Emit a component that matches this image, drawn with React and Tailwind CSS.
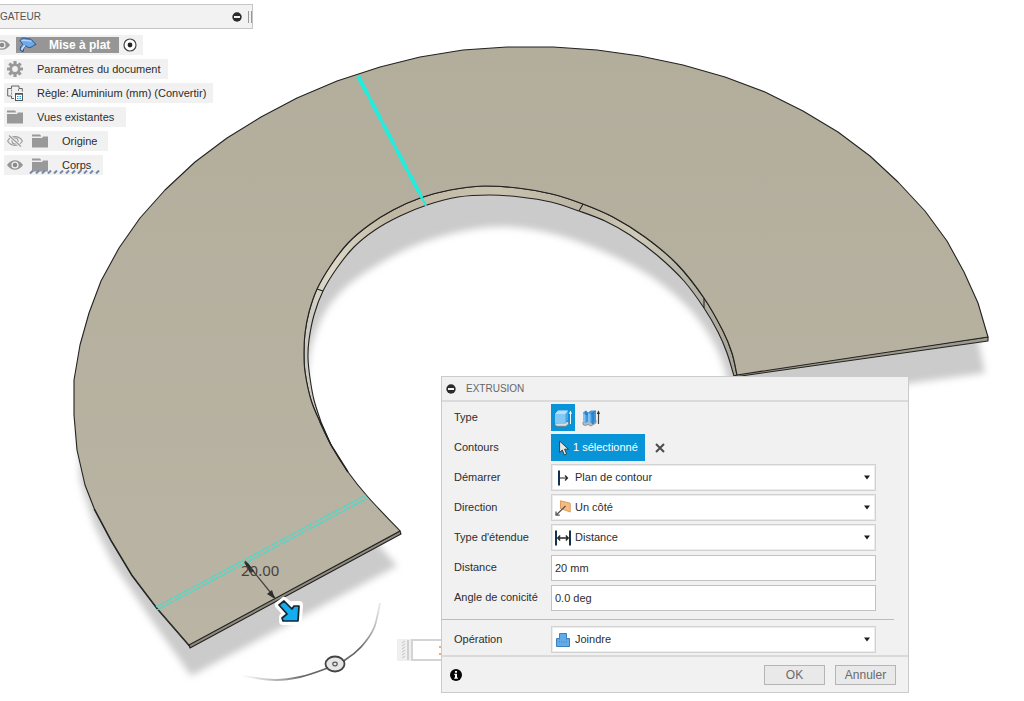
import React, { useState } from "react";

// Catmull-Rom interpolation through a list of points, returned as Bézier path data.
function curve(points) {
  let d = "";
  for (let i = 0; i < points.length - 1; i++) {
    const p0 = points[i - 1] || points[i];
    const p1 = points[i];
    const p2 = points[i + 1];
    const p3 = points[i + 2] || p2;
    d += ` C${p1[0] + (p2[0] - p0[0]) / 6} ${p1[1] + (p2[1] - p0[1]) / 6} ${p2[0] - (p3[0] - p1[0]) / 6} ${p2[1] - (p3[1] - p1[1]) / 6} ${p2[0]} ${p2[1]}`;
  }
  return d;
}

const line = (points) => points.map((p) => `L${p[0]} ${p[1]}`).join(" ");
const start = (points) => `M${points[0][0]} ${points[0][1]}`;

const OUTER = [
  [189, 645], [157, 608], [132, 575], [111, 540], [94, 508], [85, 485], [77, 450], [74, 415], [74, 380], [80, 345],
  [89, 313], [101, 281], [119, 248], [140, 218], [165, 190], [195, 162], [227, 138], [261, 117], [297, 98],
  [337, 81], [380, 67], [420, 57], [463, 50], [507, 47], [553, 47], [597, 50], [640, 56], [683, 65], [725, 77],
  [765, 92], [803, 111], [838, 132], [870, 156], [898, 182], [925, 211], [947, 241], [964, 272], [978, 303], [988, 337],
];
const INNER_TOP = [
  [737, 375], [732, 353], [723, 331], [704, 298], [677, 264], [645, 237], [613, 217], [583, 204], [552, 194], [518, 188],
  [483, 186], [450, 190], [420, 198], [393, 210], [369, 225], [348, 243], [331, 265], [317, 289], [309, 312], [305, 333],
  [304, 352], [305, 372], [311, 400], [320, 422], [331, 445], [348, 472], [368, 497], [400, 531],
];
const MERGE = INNER_TOP.length - 4;
const INNER_LOW = [
  [734, 376], [727, 353], [718, 332], [704, 308], [684, 281], [658, 256], [630, 235], [605, 221], [579, 211], [551, 202],
  [520, 197], [490, 195], [458, 197], [427, 205], [400, 216], [375, 230], [354, 247], [337, 268], [323, 291], [314, 315],
  [309, 340], [308, 358], [310, 378], [314, 400], [321, 422],
];
const SHADOW_INNER = [
  [340, 500], [309, 400], [309, 360], [315, 335], [327, 309], [346, 287], [374, 267], [407, 249], [440, 237], [475, 229],
  [510, 227], [545, 232], [579, 242], [613, 256], [645, 273], [670, 291], [693, 313], [712, 340], [725, 370], [732, 408],
];

function Model() {
  const face = `${start(OUTER)} ${line(OUTER)} L737 375 ${curve(INNER_TOP)} Z`;
  const wall = `${start(INNER_TOP)} ${curve(INNER_TOP.slice(0, MERGE + 1))} L321 422 ${curve([...INNER_LOW].reverse())} Z`;
  const shadow = `${start(SHADOW_INNER)} ${curve(SHADOW_INNER)} L985 373 L977 335 L940 300 L700 120 L400 100 L120 300 L79 430 L80 480 L94 525 L112 562 L150 618 L191 676 L397 566 Z`;
  return (
    <svg className="absolute left-0 top-0 h-[701px] w-[1024px] max-w-none" viewBox="0 0 1024 701" aria-hidden="true">
      <defs>
        <linearGradient id="face" x1="0" y1="0" x2="0" y2="1">
          <stop offset="0" stopColor="#b3ad9c" />
          <stop offset="1" stopColor="#bab4a4" />
        </linearGradient>
        <linearGradient id="wall" gradientUnits="userSpaceOnUse" x1="304" y1="0" x2="737" y2="0">
          <stop offset="0" stopColor="#c9c8c0" />
          <stop offset="0.06" stopColor="#ded9c9" />
          <stop offset="0.2" stopColor="#bfb7a3" />
          <stop offset="0.45" stopColor="#c9c2af" />
          <stop offset="0.64" stopColor="#bab4a2" />
          <stop offset="0.77" stopColor="#d0cab8" />
          <stop offset="0.88" stopColor="#b5b5a8" />
          <stop offset="1" stopColor="#aaa596" />
        </linearGradient>
        <linearGradient id="arc" gradientUnits="userSpaceOnUse" x1="242" y1="676" x2="380" y2="602">
          <stop offset="0" stopColor="#777" stopOpacity="0" />
          <stop offset="0.35" stopColor="#666" />
          <stop offset="0.75" stopColor="#666" />
          <stop offset="1" stopColor="#999" stopOpacity="0.2" />
        </linearGradient>
        <filter id="soft" x="-5%" y="-5%" width="110%" height="110%">
          <feGaussianBlur stdDeviation="3.5" />
        </filter>
      </defs>

      <path d={shadow} fill="#cbcbcb" filter="url(#soft)" />

      <g stroke="#222220" strokeWidth="1.1" strokeLinejoin="round">
        <path d="M189 644 L190 648 L401 534 L400 531 Z" fill="#8f8b80" />
        <path d="M737 373 L734 377 L988 341 L988 337 Z" fill="#9d998c" />
        <path d={wall} fill="url(#wall)" />
        <path d={face} fill="url(#face)" />
        <path d="M317 289 L323 291 M583 204 L579 211 M704 298 L704 308" fill="none" />
        <path d="M94 509 L111 541 L132 576 L157 609 L190 647" fill="none" />
      </g>
      <path d="M320 422 L331 445 L348 472" fill="none" stroke="#222220" strokeWidth="1.5" />

      <path d="M358 76 L422 198" stroke="#24ecdc" strokeWidth="3" />
      <path d="M358 76 L422 198" stroke="#24ecdc" strokeWidth="4" strokeDasharray="20 8" />
      <path d="M422 198 L426 206" stroke="#24ecdc" strokeWidth="2" />
      <path d="M156 607 L366 495 M157 610 L368 498" stroke="#45dccb" strokeWidth="1.2" strokeDasharray="9 1" />

      <path d="M245 561 L275 598" stroke="#3c3c3a" strokeWidth="1.2" />
      <path d="M244 562 L248 563 L254 571 L250 573 Z M275 599 L267 594 L272 590 Z" fill="#2c2c2a" />
      <text x="241" y="576" fontSize="15" fill="#444340" fontFamily="Noto Sans, sans-serif">20.00</text>

      <g strokeLinejoin="round">
        <path d="M279 605 L284 601 L293 609 L293 605 L299 605 L298 621 L283 621 L283 617 L288 615 Z" fill="#fff" stroke="#fff" strokeWidth="8" />
        <path d="M279 605 L284 601 L292 609 L294 606 L299 606 L298 621 L283 621 L282 618 L287 614 Z" fill="#13adf0" stroke="#14242e" strokeWidth="1.7" />
      </g>

      <path
        d={`M380 603 ${curve([[380, 603], [374, 628], [361, 647], [345, 660], [325, 669], [300, 677], [275, 680], [242, 676]])}`}
        fill="none" stroke="url(#arc)" strokeWidth="1.8"
      />
      <ellipse cx="335" cy="664" rx="9.5" ry="7.5" fill="#e6e6e6" stroke="#444" strokeWidth="1.8" />
      <ellipse cx="335" cy="664" rx="2.2" ry="1.8" fill="none" stroke="#555" strokeWidth="1.2" />
    </svg>
  );
}

const Eye = ({ off }) => (
  <svg className="h-4 w-4 shrink-0" viewBox="0 0 16 16" aria-hidden="true">
    {off ? (
      <g fill="none" stroke="#9a9a9a" strokeWidth="1.1">
        <path d="M.6 8 C4 2.2 12 2.2 15.4 8 C12 13.8 4 13.8 .6 8 Z" />
        <circle cx="8" cy="8" r="3" />
        <path d="M2 2.5 L14 13.5" stroke="#f1f1f1" strokeWidth="3" />
        <path d="M2 2.5 L14 13.5" />
      </g>
    ) : (
      <g>
        <path d="M0 8 C4 1.6 12 1.6 16 8 C12 14.4 4 14.4 0 8 Z" fill="#959595" />
        <circle cx="8" cy="8" r="3.6" fill="#f1f1f1" />
        <circle cx="8" cy="8" r="2.3" fill="#8a8a8a" />
      </g>
    )}
  </svg>
);

const Folder = () => (
  <svg className="h-4 w-4 shrink-0" viewBox="0 0 16 16" fill="#999" aria-hidden="true">
    <path d="M0 1.5 H8 L9.5 3.6 H0 Z" />
    <path d="M0 5 H10 L11 3.6 H16 V14.5 H0 Z" />
  </svg>
);

const Gear = () => (
  <svg className="h-4 w-4 shrink-0" viewBox="0 0 16 16" aria-hidden="true">
    {[0, 45, 90, 135].map((angle) => (
      <rect key={angle} x="6.4" y="0" width="3.2" height="16" rx="0.6" fill="#999" transform={`rotate(${angle} 8 8)`} />
    ))}
    <circle cx="8" cy="8" r="5.6" fill="#999" />
    <circle cx="8" cy="8" r="2.9" fill="#f1f1f1" />
  </svg>
);

const Rule = () => (
  <svg className="h-4 w-4 shrink-0" viewBox="0 0 16 16" fill="none" aria-hidden="true">
    <path d="M7 13.5 H4.5 V11 H.7 V3.5 H4.5 V1 H12 V3.5 H15.3 V6.5" stroke="#666" />
    <path d="M4.5 4.5 V10 M11.5 4 V7" stroke="#888" strokeDasharray="2 1" />
    <rect x="8.5" y="8.5" width="7" height="7" fill="#fff" stroke="#555" />
    <path d="M8 9 H16" stroke="#555" strokeWidth="1.5" />
    <path d="M10 11.5 H11.5 M12.5 11.5 H14 M10 13.5 H11.5 M12.5 13.5 H14" stroke="#2b9bd8" />
  </svg>
);

const Sheet = () => (
  <svg className="h-4 w-[18px] shrink-0" viewBox="0 0 18 16" aria-hidden="true">
    <path d="M1 3.5 C3 .5 5 .8 7 1.5 C9 2.5 11 1.2 12.5 2.8 L17 7.5 C13.5 8.3 12 12 8.5 10 L6.8 8.8 C5.2 10 4.4 12 4 14.8 L1.2 13 C1.2 10.5 2 8.8 3.6 7.6 C3 6 2 5 1 3.5 Z" fill="#6ea8e6" stroke="#1d4f91" />
    <path d="M2.5 3.8 C6 2 9 5 12.5 4" fill="none" stroke="#b5d5f6" strokeWidth="1.3" />
    <path d="M2.4 12.8 L5.8 8.6" stroke="#dcdcdc" strokeWidth="1.6" />
  </svg>
);

const Minus = () => (
  <svg className="h-[10px] w-[10px]" viewBox="0 0 10 10" aria-hidden="true">
    <circle cx="5" cy="5" r="4.7" fill="#2b2b2b" />
    <rect x="2" y="4" width="6" height="2" fill="#f4f4f4" />
  </svg>
);

function Browser() {
  const item = "flex h-5 items-center bg-[#f1f1f1] text-[11px] text-[#2d2d2d] whitespace-nowrap";
  return (
    <nav className="relative w-[253px]" aria-label="Navigateur">
      <header className="mt-1 flex h-[25px] items-center border border-l-0 border-[#c6c6c6] bg-[#f2f2f2] text-[10px] text-[#555]">
        <span className="flex-1">GATEUR</span>
        <button type="button" aria-label="Réduire le navigateur"><Minus /></button>
        <span className="ml-[6px] h-3 w-1 border-x border-[#999]" />
      </header>
      <ul className="mt-[6px] flex flex-col items-start gap-1">
        <li className={`${item} pr-[6px]`}>
          <span className="-ml-[6px] flex"><Eye /></span>
          <span className="ml-[6px] flex h-4 items-center bg-[#969696] pl-[3px] pr-[9px] text-[12px] font-bold text-white">
            <Sheet />
            <span className="ml-3">Mise à plat</span>
          </span>
          <label className="ml-1 flex">
            <input type="radio" name="active" defaultChecked aria-label="Activer Mise à plat" className="peer sr-only" />
            <svg className="h-[14px] w-[14px]" viewBox="0 0 14 14" aria-hidden="true">
              <circle cx="7" cy="7" r="6" fill="#fff" stroke="#444" strokeWidth="1.2" />
              <circle cx="7" cy="7" r="2.4" fill="#222" />
            </svg>
          </label>
        </li>
        <li className={`${item} ml-1 gap-[14px] pl-[3px] pr-[7px]`}><Gear />Paramètres du document</li>
        <li className={`${item} ml-1 gap-[14px] pl-[3px] pr-[7px]`}><Rule />Règle: Aluminium (mm) (Convertir)</li>
        <li className={`${item} ml-1 gap-[14px] pl-[3px] pr-3`}><Folder />Vues existantes</li>
        <li className={`${item} ml-1 pl-[3px] pr-[11px]`}>
          <Eye off /><span className="ml-[9px] mr-[14px]"><Folder /></span>Origine
        </li>
        <li className={`${item} relative ml-1 pl-[3px] pr-3`}>
          <Eye /><span className="ml-[9px] mr-[14px]"><Folder /></span>Corps
          <svg className="absolute bottom-[1px] left-[25px] h-1 w-[72px]" viewBox="0 0 72 4" aria-hidden="true">
            {Array.from({ length: 12 }, (_, i) => (
              <path key={i} d={`M${i * 6 + 1} 3.5 L${i * 6 + 4} .5`} stroke="#7487a8" strokeWidth="2" />
            ))}
          </svg>
        </li>
      </ul>
    </nav>
  );
}

const StartIcon = () => (
  <svg className="h-4 w-4" viewBox="0 0 16 16" fill="none" aria-hidden="true">
    <path d="M4 .5 V15.5" stroke="#12304f" strokeWidth="2" />
    <path d="M5 8 H12.5 M10 5.5 L12.5 8 L10 10.5" stroke="#222" strokeWidth="1.2" />
  </svg>
);
const SideIcon = () => (
  <svg className="h-4 w-4" viewBox="0 0 16 16" fill="none" aria-hidden="true">
    <path d="M5.5 .8 L15.2 3.2 V12 L5.5 8.5 Z" fill="#f3bb82" stroke="#dd9b5b" />
    <path d="M10.5 6 L1.2 15 M1 11.5 V15.2 H4.8" stroke="#555" strokeWidth="1.3" />
  </svg>
);
const DistanceIcon = () => (
  <svg className="h-4 w-4" viewBox="0 0 16 16" fill="none" aria-hidden="true">
    <path d="M1 .5 V15.5 M15 .5 V15.5" stroke="#12304f" strokeWidth="2" />
    <path d="M2.5 8 H13.5 M5.2 5.5 L2.7 8 L5.2 10.5 M10.8 5.5 L13.3 8 L10.8 10.5" stroke="#222" strokeWidth="1.3" />
  </svg>
);
const JoinIcon = () => (
  <svg className="h-4 w-4" viewBox="0 0 16 16" aria-hidden="true">
    <path d="M4.5 1.5 H11.5 V6.5 H14.5 V14.5 H1.5 V6.5 H4.5 Z" fill="#62abe6" stroke="#3a7fc0" />
    <path d="M4.5 6.5 V10 H11.5 V6.5" fill="none" stroke="#4a90d0" strokeDasharray="1.5 1" />
  </svg>
);

function Row({ label, id, children }) {
  return (
    <div className="flex h-[27px] items-center pl-3 pr-8">
      {id ? <label htmlFor={id} className="w-[97px] shrink-0">{label}</label> : <span className="w-[97px] shrink-0">{label}</span>}
      {children}
    </div>
  );
}

function Choice({ id, label, icon, options }) {
  return (
    <Row id={id} label={label}>
      <div className="flex h-[27px] min-w-0 flex-1 items-center border border-[#d2d2d2] bg-white pl-[3px] pr-[5px] shadow-[inset_0_0_0_1px_#ececec]">
        {icon}
        <select id={id} className="ml-1 h-full min-w-0 flex-1 appearance-none bg-transparent text-[11px] text-[#2d2d2d] outline-none">
          {options.map((o) => <option key={o}>{o}</option>)}
        </select>
        <svg className="h-[5px] w-[6px]" viewBox="0 0 6 5" aria-hidden="true"><path d="M0 .5 H6 L3 4.5 Z" fill="#1c1c1c" /></svg>
      </div>
    </Row>
  );
}

function Entry({ id, label, initial }) {
  const [value, setValue] = useState(initial);
  return (
    <Row id={id} label={label}>
      <input
        id={id} type="text" value={value} onChange={(e) => setValue(e.target.value)}
        className="h-[26px] min-w-0 flex-1 border border-[#c2c2c2] bg-white px-[3px] text-[11px] text-[#2d2d2d] outline-none"
      />
    </Row>
  );
}

function Extrusion() {
  const action = "h-5 w-[61px] border border-[#b5b5b5] bg-[#e9e9e9] text-[12px] leading-none text-[#6a6a6a]";
  return (
    <section
      aria-label="Extrusion"
      className="absolute left-[441px] top-[376px] w-[468px] border border-[#cbcbcb] bg-[#f1f1f1] text-[11px] text-[#2d2d2d]"
    >
      <header className="flex h-[25px] items-center gap-[10px] border-b-2 border-[#dadada] pl-1 text-[10px] text-[#666]">
        <button type="button" aria-label="Réduire"><Minus /></button>
        <h2>EXTRUSION</h2>
      </header>
      <form onSubmit={(e) => e.preventDefault()}>
        <div className="flex flex-col gap-[3px] pt-[2px]">
          <Row label="Type">
            <button type="button" aria-label="Extruder" aria-pressed="true" className="flex h-[27px] w-6 items-center justify-center bg-[#0a94d8]">
              <svg className="h-[18px] w-[18px]" viewBox="0 0 18 18" aria-hidden="true">
                <path d="M1 14.5 V16 L3 17.3 H12 L14.5 15 V13" fill="#ddd" stroke="#777" strokeWidth=".7" />
                <path d="M1 5 L4 1.5 H14 V11 L11.5 14.5 H1 Z" fill="#4ea4e4" />
                <path d="M1 5 L4 1.5 H14 L11.5 5 Z" fill="#b9e0fb" />
                <rect x="1" y="5" width="10.5" height="9.5" fill="#84c8f7" />
                <path d="M16.5 15 V3.5" stroke="#e9f5fd" />
                <path d="M14.8 4.8 L16.5 1.5 L18 4.8 Z" fill="#fff" />
              </svg>
            </button>
            <button type="button" aria-label="Extrusion fine" aria-pressed="false" className="flex h-[27px] w-8 items-center justify-center">
              <svg className="h-[18px] w-[18px]" viewBox="0 0 18 18" aria-hidden="true">
                <path d="M1 13 V15.5 L3 16.5 L6 15.5 L9 17 L14 14 V11" fill="#bbb" stroke="#777" strokeWidth=".7" />
                <path d="M1 3.5 L4 1.5 L6 3.5 L9 1.5 H14 V12 L11 15.5 L9 14 L6 12.5 L4 14 L1 13 Z" fill="#4096da" />
                <path d="M1 4 L3.5 5.5 V14 L1 13 Z M6 4 L8.5 5 V14 L6 12.5 Z" fill="#7fc1f2" />
                <path d="M4 2 V6 L6 4.5 M9 5.5 L13.5 2 M11 4 V15" fill="none" stroke="#1f6fb5" strokeWidth=".9" />
                <path d="M16.5 15 V4" stroke="#444" strokeWidth="1.2" />
                <path d="M14.7 5 L16.5 1.3 L18 5 Z" fill="#333" />
              </svg>
            </button>
          </Row>
          <Row label="Contours">
            <button type="button" className="flex h-[27px] items-center gap-1 bg-[#0a94d8] pl-2 pr-[7px] text-white">
              <svg className="h-4 w-[10px]" viewBox="0 0 10 16" aria-hidden="true">
                <path d="M.6 1 V12.5 L3.3 10 L5.3 15 L7.6 14 L5.6 9.2 H9.4 Z" fill="#e8e8e8" stroke="#333" strokeWidth=".9" />
              </svg>
              1 sélectionné
            </button>
            <button type="button" aria-label="Effacer la sélection" className="ml-[10px] flex">
              <svg className="h-[10px] w-[10px]" viewBox="0 0 10 10" aria-hidden="true">
                <path d="M1 1 L9 9 M9 1 L1 9" stroke="#4c4c4c" strokeWidth="2" />
              </svg>
            </button>
          </Row>
          <Choice id="start" label="Démarrer" icon={<StartIcon />} options={["Plan de contour"]} />
          <Choice id="direction" label="Direction" icon={<SideIcon />} options={["Un côté"]} />
          <Choice id="extent" label="Type d'étendue" icon={<DistanceIcon />} options={["Distance"]} />
          <Entry id="distance" label="Distance" initial="20 mm" />
          <Entry id="taper" label="Angle de conicité" initial="0.0 deg" />
        </div>
        <hr className="mb-[6px] mr-[14px] mt-2 border-[#bdbdbd]" />
        <Choice id="operation" label="Opération" icon={<JoinIcon />} options={["Joindre"]} />
        <footer className="mt-[2px] flex h-[37px] items-center border-t-2 border-[#dadada] pl-2 pr-3">
          <button type="button" aria-label="Informations" className="mr-auto">
            <svg className="h-3 w-3" viewBox="0 0 12 12" aria-hidden="true">
              <circle cx="6" cy="6" r="6" fill="#050505" />
              <path d="M5 2 H7 V3.7 H5 Z M4.3 4.8 H7 V8.5 H7.8 V9.7 H4.3 V8.5 H5 V6 H4.3 Z" fill="#fff" />
            </svg>
          </button>
          <button type="submit" className={action}>OK</button>
          <button type="button" className={`${action} ml-[10px]`}>Annuler</button>
        </footer>
      </form>
    </section>
  );
}

export default function App() {
  return (
    <main className="relative min-h-screen overflow-hidden bg-white font-['Liberation_Sans',Arial,sans-serif]">
      <Model />
      <Browser />
      <div className="absolute left-[397px] top-[639px] flex h-[22px] w-[60px]">
        <svg className="h-[22px] w-[14px] bg-[#efefef]" viewBox="0 0 14 22" aria-hidden="true">
          <path d="M5 4 L8 2 M5 7 L8 5 M5 10 L8 8 M5 13 L8 11 M5 16 L8 14 M5 19 L8 17" stroke="#c4c4c4" />
          <path d="M11 1 V21" stroke="#d0d0d0" strokeWidth="2" />
        </svg>
        <input aria-label="Distance d'extrusion" className="min-w-0 flex-1 border-2 border-[#d4d4d4] bg-white outline-none" />
        <svg className="absolute left-[42px] top-[7px] h-[10px] w-[3px]" viewBox="0 0 3 10" aria-hidden="true">
          <path d="M0 1 H3 M0 8 H3" stroke="#dd9350" strokeWidth="1.5" />
        </svg>
      </div>
      <Extrusion />
    </main>
  );
}
